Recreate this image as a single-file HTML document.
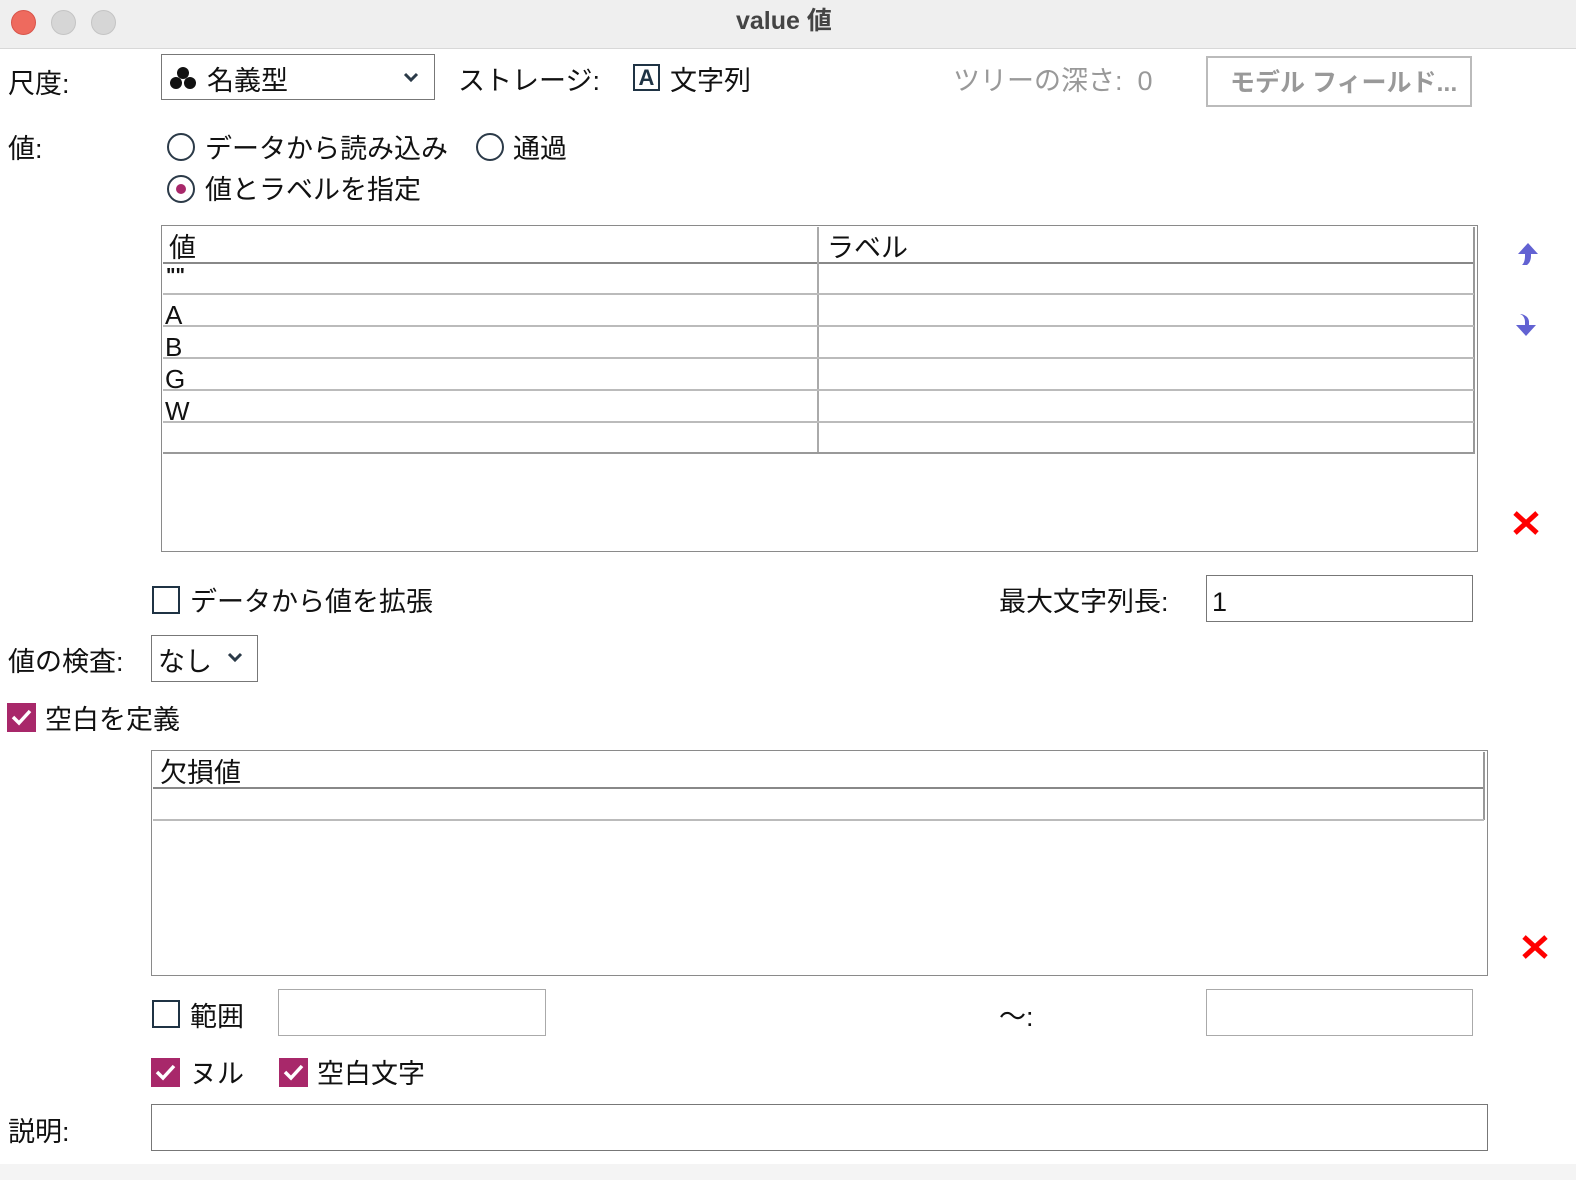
<!DOCTYPE html>
<html><head><meta charset="utf-8"><style>
*{margin:0;padding:0;box-sizing:border-box}
body{width:1576px;height:1180px;background:#fff;position:relative;overflow:hidden;font-family:"Liberation Sans","Noto Sans CJK JP",sans-serif;font-size:27px;color:#111}
.a{position:absolute;white-space:nowrap;line-height:1}
.t{margin-top:3px}
.tb{position:absolute;left:0;top:0;width:1576px;height:49px;background:#efefef;border-bottom:1px solid #d8d8d8}
.dot{position:absolute;top:10px;width:25px;height:25px;border-radius:50%;background:#d6d6d6;border:1px solid #c4c4c4}
.box{position:absolute;border:1px solid #8a8a8a;background:#fff}
.radio{position:absolute;width:28px;height:28px;border-radius:50%;border:2px solid #2b3a48;background:#fff}
.cb{position:absolute;width:28px;height:28px;border:2px solid #1f3344;background:#fff}
.cbc{position:absolute;width:29px;height:29px;background:#a8286a}
.hl{position:absolute;background:#bbb;height:2px}
.vl{position:absolute;background:#bbb;width:2px}
</style></head><body>
<div class="tb">
<div class="dot" style="left:11px;background:#ee6a5e;border-color:#d8544a"></div>
<div class="dot" style="left:51px"></div>
<div class="dot" style="left:91px"></div>
<div class="a" style="left:736px;top:9px;font-size:25px;font-weight:bold;color:#444">value 値</div>
</div>

<div class="a t" style="left:8px;top:68px">尺度:</div>
<div class="box" style="left:161px;top:54px;width:274px;height:46px;border-color:#777"></div>
<svg class="a" style="left:170px;top:66px" width="26" height="24" viewBox="0 0 26 24"><circle cx="13" cy="7" r="6" fill="#111"/><circle cx="6" cy="17" r="6" fill="#111"/><circle cx="20" cy="17" r="6" fill="#111"/></svg>
<div class="a t" style="left:207px;top:65px">名義型</div>
<svg class="a" style="left:403px;top:71px" width="16" height="12" viewBox="0 0 16 12"><path d="M2 3l6 6 6-6" stroke="#2b3a48" stroke-width="3" fill="none"/></svg>
<div class="a t" style="left:458px;top:65px">ストレージ:</div>
<div class="a" style="left:633px;top:64px;width:27px;height:27px;border:2px solid #1f3344;font-size:22px;text-align:center;line-height:23px;font-weight:bold;color:#1f3344">A</div>
<div class="a t" style="left:670px;top:65px">文字列</div>
<div class="a t" style="left:953px;top:65px;color:#999">ツリーの深さ:&nbsp; 0</div>
<div class="box" style="left:1206px;top:56px;width:266px;height:51px;border:2px solid #bbb"></div>
<div class="a t" style="left:1230px;top:68px;color:#999;font-size:25px;font-weight:bold">モデル フィールド...</div>

<div class="a t" style="left:8px;top:133px">値:</div>
<div class="radio" style="left:167px;top:133px"></div>
<div class="a t" style="left:205px;top:133px">データから読み込み</div>
<div class="radio" style="left:476px;top:133px"></div>
<div class="a t" style="left:513px;top:133px">通過</div>
<div class="radio" style="left:167px;top:175px"><div style="position:absolute;left:7px;top:7px;width:10px;height:10px;border-radius:50%;background:#a8286a"></div></div>
<div class="a t" style="left:205px;top:174px">値とラベルを指定</div>

<div class="box" style="left:161px;top:225px;width:1317px;height:327px"></div>
<div class="hl" style="left:163px;top:262px;width:1311px;background:#888"></div>
<div class="vl" style="left:817px;top:227px;height:227px;background:#aaa"></div>
<div class="vl" style="left:1473px;top:227px;height:227px;background:#999"></div>
<div class="hl" style="left:163px;top:293px;width:1311px"></div>
<div class="hl" style="left:163px;top:325px;width:1311px"></div>
<div class="hl" style="left:163px;top:357px;width:1311px"></div>
<div class="hl" style="left:163px;top:389px;width:1311px"></div>
<div class="hl" style="left:163px;top:421px;width:1311px"></div>
<div class="hl" style="left:163px;top:452px;width:1311px;background:#999"></div>
<div class="a t" style="left:169px;top:232px">値</div>
<div class="a t" style="left:827px;top:232px">ラベル</div>
<div class="a" style="left:166px;top:266px;font-size:20px;font-weight:bold">""</div>
<div class="a t" style="left:165px;top:299px;font-size:26px">A</div>
<div class="a t" style="left:165px;top:331px;font-size:26px">B</div>
<div class="a t" style="left:165px;top:363px;font-size:26px">G</div>
<div class="a t" style="left:165px;top:395px;font-size:26px">W</div>

<svg class="a" style="left:1515px;top:242px" width="26" height="26" viewBox="0 0 26 26"><path d="M13 1L3 12h7v2c0 4-1 7-3 9h5c3-2 4-6 4-9v-2h7z" fill="#6262d2"/></svg>
<svg class="a" style="left:1513px;top:312px" width="26" height="26" viewBox="0 0 26 26"><path d="M7 2c3 1 5 4 5 8v3H3l10 11 10-11h-7v-3c0-4-3-7-8-8z" fill="#6262d2"/></svg>
<svg class="a" style="left:1512px;top:510px" width="28" height="26" viewBox="0 0 28 26"><path d="M3 3L25 23M25 3L3 23" stroke="#f00" stroke-width="5"/></svg>

<div class="cb" style="left:152px;top:586px"></div>
<div class="a t" style="left:190px;top:586px">データから値を拡張</div>
<div class="a t" style="left:999px;top:586px">最大文字列長:</div>
<div class="box" style="left:1206px;top:575px;width:267px;height:47px;border-color:#777"></div>
<div class="a t" style="left:1212px;top:586px">1</div>

<div class="a t" style="left:8px;top:646px">値の検査:</div>
<div class="box" style="left:151px;top:635px;width:107px;height:47px;border-color:#777"></div>
<div class="a t" style="left:158px;top:646px">なし</div>
<svg class="a" style="left:227px;top:651px" width="16" height="12" viewBox="0 0 16 12"><path d="M2 3l6 6 6-6" stroke="#2b3a48" stroke-width="3" fill="none"/></svg>

<div class="cbc" style="left:7px;top:703px"></div>
<svg class="a" style="left:7px;top:703px" width="29" height="29" viewBox="0 0 29 29"><path d="M6 14l6 6 11-12" stroke="#fff" stroke-width="3.5" fill="none"/></svg>
<div class="a t" style="left:45px;top:704px">空白を定義</div>

<div class="box" style="left:151px;top:750px;width:1337px;height:226px"></div>
<div class="hl" style="left:153px;top:787px;width:1331px;background:#888"></div>
<div class="vl" style="left:1483px;top:752px;height:68px;background:#999"></div>
<div class="hl" style="left:153px;top:819px;width:1331px"></div>
<div class="a t" style="left:160px;top:757px">欠損値</div>
<svg class="a" style="left:1521px;top:934px" width="28" height="26" viewBox="0 0 28 26"><path d="M3 3L25 23M25 3L3 23" stroke="#f00" stroke-width="5"/></svg>

<div class="cb" style="left:152px;top:1000px"></div>
<div class="a t" style="left:190px;top:1001px">範囲</div>
<div class="box" style="left:278px;top:989px;width:268px;height:47px;border-color:#aaa"></div>
<div class="a t" style="left:999px;top:1001px">〜:</div>
<div class="box" style="left:1206px;top:989px;width:267px;height:47px;border-color:#aaa"></div>

<div class="cbc" style="left:151px;top:1058px"></div>
<svg class="a" style="left:151px;top:1058px" width="29" height="29" viewBox="0 0 29 29"><path d="M6 14l6 6 11-12" stroke="#fff" stroke-width="3.5" fill="none"/></svg>
<div class="a t" style="left:190px;top:1058px">ヌル</div>
<div class="cbc" style="left:279px;top:1058px"></div>
<svg class="a" style="left:279px;top:1058px" width="29" height="29" viewBox="0 0 29 29"><path d="M6 14l6 6 11-12" stroke="#fff" stroke-width="3.5" fill="none"/></svg>
<div class="a t" style="left:317px;top:1058px">空白文字</div>

<div class="a t" style="left:8px;top:1116px">説明:</div>
<div class="box" style="left:151px;top:1104px;width:1337px;height:47px;border-color:#777"></div>
<div style="position:absolute;left:0;top:1164px;width:1576px;height:16px;background:#f4f4f4"></div>
</body></html>
